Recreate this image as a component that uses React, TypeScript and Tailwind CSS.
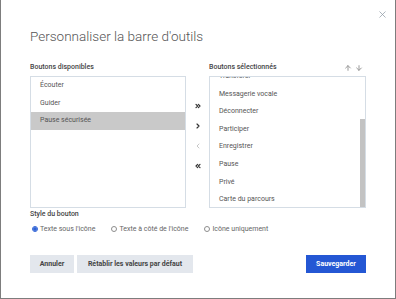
import React from "react";
import { ChevronsRight, ChevronRight, ChevronLeft, ChevronsLeft, ArrowUp, ArrowDown, X } from "lucide-react";

const leftItems = ["Écouter", "Guider", "Pause sécurisée"];
const rightItems = ["Transférer", "Messagerie vocale", "Déconnecter", "Participer", "Enregistrer", "Pause", "Privé", "Carte du parcours"];

function Radio({ checked, label }: { checked?: boolean; label: string }) {
  return (
    <div className="flex items-center gap-[2px]">
      <span className={`w-[6px] h-[6px] rounded-full border ${checked ? "border-[#2f63d6] bg-white flex items-center justify-center" : "border-[#8d8d8d]"}`}>
        {checked && <span className="w-[4px] h-[4px] rounded-full bg-[#2f63d6]" />}
      </span>
      <span>{label}</span>
    </div>
  );
}

export default function App() {
  return (
    <div className="w-[396px] h-[299px] bg-white border-x border-b border-[#7d7d7d] relative text-[#555] overflow-hidden" style={{ fontFamily: "Roboto, 'Liberation Sans', sans-serif" }}>
      <X className="absolute left-[376px] top-[9px] text-[#8f99a4]" size={11} strokeWidth={1.6} />
      <div className="pl-[29px] pr-[29px]">
        <div className="pt-[28px] h-[44px] text-[13.5px] leading-[16px] font-light text-[#555]">Personnaliser la barre d'outils</div>
        <div className="mt-[19px] flex">
          <div className="w-[156px] flex flex-col">
            <div className="h-[13px] text-[7px] font-medium text-[#444] leading-[9px]">Boutons disponibles</div>
            <div className="h-[132px] border border-[#d5dde5]">
              {leftItems.map((t, i) => (
                <div key={t} className={`h-[17.7px] leading-[17.7px] pl-[9px] text-[7px] ${i === 2 ? "bg-[#c9c9c9]" : ""}`}>{t}</div>
              ))}
            </div>
          </div>
          <div className="w-[23px] flex flex-col items-center pt-[39px] gap-[12px] text-[#333]">
            <ChevronsRight size={8} strokeWidth={3.5} />
            <ChevronRight size={8} strokeWidth={3.5} />
            <ChevronLeft size={8} strokeWidth={2} className="text-[#aaa]" />
            <ChevronsLeft size={8} strokeWidth={3.5} />
          </div>
          <div className="w-[157px] flex flex-col">
            <div className="h-[13px] flex justify-between items-start">
              <span className="text-[7px] font-medium text-[#444] leading-[9px]">Boutons sélectionnés</span>
              <span className="flex gap-[3px] text-[#999] mr-[3px] mt-[1px]">
                <ArrowUp size={8} strokeWidth={3} />
                <ArrowDown size={8} strokeWidth={3} />
              </span>
            </div>
            <div className="h-[132px] border border-[#d5dde5] relative overflow-hidden">
              <div className="mt-[-9px]">
                {rightItems.map((t) => (
                  <div key={t} className="h-[17.6px] leading-[17.6px] pl-[9px] text-[7px]">{t}</div>
                ))}
              </div>
              <div className="absolute right-0 top-[42px] bottom-0 w-[5px] bg-[#c3c3c3]" />
            </div>
          </div>
        </div>
        <div className="mt-[2px] h-[9px] text-[7px] leading-[9px] font-medium text-[#444]">Style du bouton</div>
        <div className="mt-[5px] flex gap-[16px] text-[7px] leading-[10px] text-[#666] pl-[2px]">
          <Radio checked label="Texte sous l'icône" />
          <Radio label="Texte à côté de l'icône" />
          <Radio label="Icône uniquement" />
        </div>
        <div className="mt-[21px] flex items-center">
          <button className="h-[18px] w-[44px] bg-[#e3e7ed] text-[7px] font-bold text-[#444]">Annuler</button>
          <button className="ml-[3px] h-[18px] w-[116px] bg-[#e3e7ed] text-[7px] font-bold text-[#444]">Rétablir les valeurs par défaut</button>
          <button className="ml-auto h-[18px] w-[60px] bg-[#2457d4] text-[7px] font-bold text-white">Sauvegarder</button>
        </div>
      </div>
    </div>
  );
}
